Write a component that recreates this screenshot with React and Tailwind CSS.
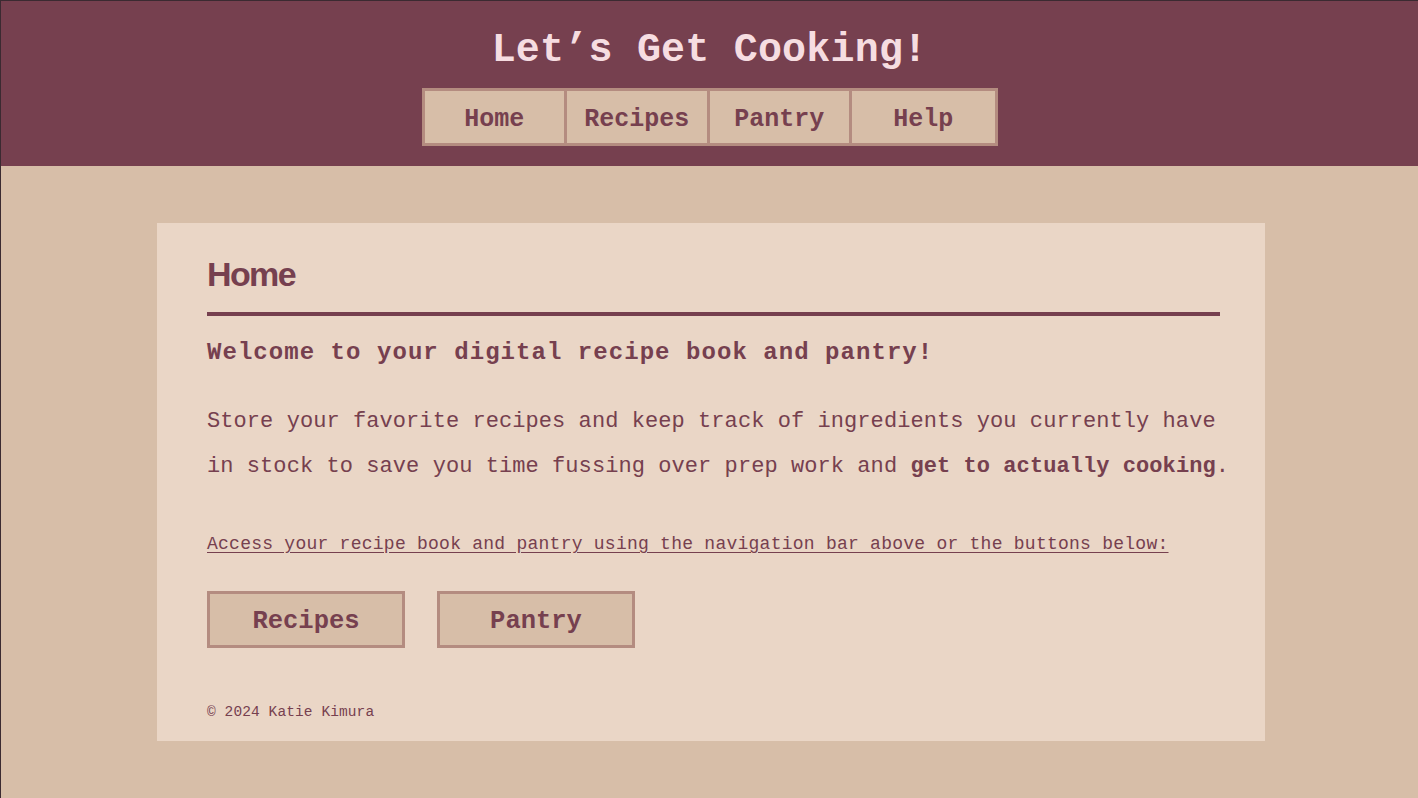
import React from "react";

const navItems = ["Home", "Recipes", "Pantry", "Help"];

const mono = "font-['Liberation_Mono','DejaVu_Sans_Mono',monospace]";

const App = () => {
  return (
    <div className={`min-h-[798px] bg-[#d7bea8] border-t border-l border-[#3b2a31] ${mono}`}>
      {/* Header */}
      <header className="bg-[#76404f] flex flex-col items-center pt-[26px] pb-5">
        <h1 className="text-[40px] leading-[48px] font-bold text-[#f6dde1] tracking-[0.2px]">
          Let’s Get Cooking!
        </h1>
        <nav className="mt-[13px] flex border-[3px] border-[#b48c80] divide-x-[3px] divide-[#b48c80] bg-[#d7bea8]">
          {navItems.map((item) => (
            <button
              key={item}
              className="w-[142.5px] h-[52px] pt-[6px] text-[25px] font-bold text-[#76404f] flex items-center justify-center"
            >
              {item}
            </button>
          ))}
        </nav>
      </header>

      {/* Main card */}
      <main className="py-[57px] pl-[156px]">
        <section className="w-[1108px] bg-[#ead6c6] pl-[50px] pr-[45px] pt-[30px] pb-[19px] text-[#76404f]">
          <h2 className="text-[34px] leading-[43px] font-bold tracking-[-1.6px] font-['Liberation_Sans',Arial,sans-serif]">
            Home
          </h2>
          <div className="mt-4 h-[4px] bg-[#76404f]" />

          <h3 className="mt-[21px] text-[24px] leading-8 font-bold tracking-[1.05px]">
            Welcome to your digital recipe book and pantry!
          </h3>

          <p className="mt-[30px] text-[22px] leading-[45px] tracking-[0.07px] whitespace-nowrap">
            Store your favorite recipes and keep track of ingredients you currently have
            <br />
            in stock to save you time fussing over prep work and{" "}
            <strong className="font-bold">get to actually cooking</strong>.
          </p>

          <p className="mt-[42px] text-[18px] leading-[27px] tracking-[0.25px] underline underline-offset-[3px]">
            Access your recipe book and pantry using the navigation bar above or the buttons below:
          </p>

          <div className="mt-[33px] flex gap-8">
            {["Recipes", "Pantry"].map((label) => (
              <button
                key={label}
                className="w-[198px] h-[57px] pt-[6px] border-[3px] border-[#b48c80] bg-[#d7bea8] text-[25.5px] font-bold text-[#76404f] flex items-center justify-center"
              >
                {label}
              </button>
            ))}
          </div>

          <footer className="mt-[54px] text-[14.5px] leading-5 tracking-[0.1px]">© 2024 Katie Kimura</footer>
        </section>
      </main>
    </div>
  );
};

export default App;
